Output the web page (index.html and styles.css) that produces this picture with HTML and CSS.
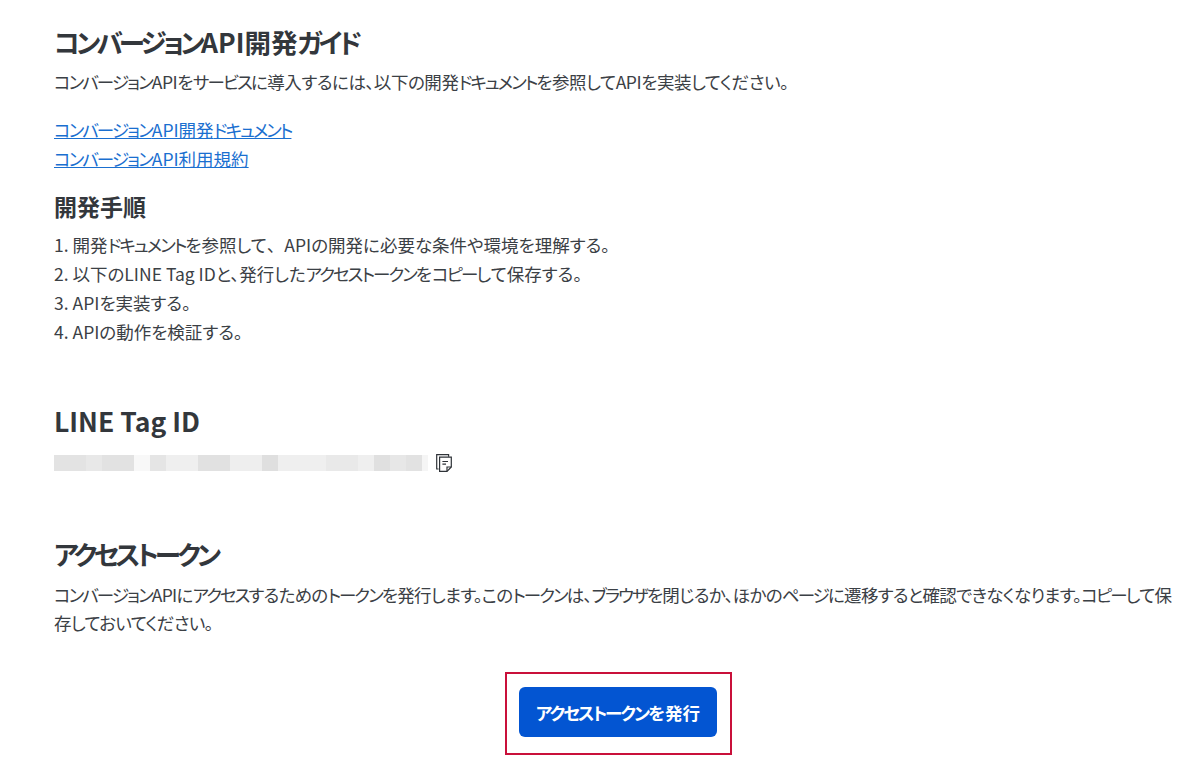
FILE: index.html
```html
<!DOCTYPE html>
<html lang="ja">
<head>
	<meta charset="UTF-8">
	<title>コンバージョンAPI開発ガイド</title>
	<link rel="stylesheet" href="styles.css">
</head>
<body>
	<main class="container">
		<section class="guide">
			<h1><span class="ka">コンバージョン</span>API開発<span class="ka">ガイド</span></h1>
			<p><span class="ka">コンバージョン</span>APIを<span class="ka">サービス</span>に導入するには、以下の開発<span class="ka">ドキュメント</span>を参照してAPIを実装してください。</p>
			<div class="links">
				<a href="#"><span class="ka">コンバージョン</span>API開発<span class="ka">ドキュメント</span></a>
				<a href="#"><span class="ka">コンバージョン</span>API利用規約</a>
			</div>
			<h2>開発手順</h2>
			<ol class="steps">
				<li>1. 開発<span class="ka">ドキュメント</span>を参照して<span class="pu">、</span>APIの開発に必要な条件や環境を理解する。</li>
				<li>2. 以下のLINE Tag IDと、発行した<span class="ka">アクセストークン</span>を<span class="ka">コピー</span>して保存する。</li>
				<li>3. APIを実装する。</li>
				<li>4. APIの動作を検証する。</li>
			</ol>
		</section>

		<section class="tag">
			<h1>LINE Tag ID</h1>
			<div class="tag-row">
				<span class="tag-value"></span>
				<svg class="copy-icon" width="16" height="18" viewBox="0 0 16 18" fill="none" stroke="#2f3338" stroke-width="1.2">
					<path d="M2.6 15H.7V.7H12.6V2.8"/>
					<path d="M3.6 3.2H15.3V13L11 17.3H3.6Z"/>
					<path d="M11 17.3V13H15.3"/>
					<path d="M6.4 7.5H12M6.4 10.2H10"/>
				</svg>
			</div>
		</section>

		<section class="token">
			<h1><span class="ka">アクセストークン</span></h1>
			<p><span class="ka">コンバージョン</span>APIに<span class="ka">アクセス</span>するための<span class="ka">トークン</span>を発行します。この<span class="ka">トークン</span>は、<span class="ka">ブラウザ</span>を閉じるか、ほかの<span class="ka">ページ</span>に遷移すると確認できなくなります。<span class="ka">コピー</span>して保<br>存しておいてください。</p>
			<div class="actions">
				<div class="highlight">
					<button class="btn-issue"><span class="ka">アクセストークン</span>を発行</button>
				</div>
			</div>
		</section>
	</main>
</body>
</html>
```

FILE: styles.css
```css
html, body {
	margin: 0;
	background: #fff;
}
body {
	font-family: "Noto Sans CJK JP", "Noto Sans", sans-serif;
	font-feature-settings: "palt";
	font-size: 17.5px;
	line-height: 28.8px;
	color: #3b4045;
	overflow: hidden;
}
.container {
	padding: 23px 10px 0 54px;
}
/* katakana runs are narrower than the kanji in the reference */
.ka {
	letter-spacing: -0.11em;
}
.pu {
	font-feature-settings: normal;
}
h1 {
	margin: 0;
	font-size: 26.5px;
	line-height: 38px;
	font-weight: 700;
	color: #33373c;
}
h1 .ka {
	letter-spacing: -0.14em;
}
h2 {
	margin: 16px 0 0;
	font-size: 23px;
	line-height: 34px;
	font-weight: 700;
	color: #33373c;
}
p {
	margin: 0;
	letter-spacing: -0.025em;
}
.guide p {
	margin-top: 7px;
}
.links {
	margin-top: 19px;
}
.links a {
	display: block;
	width: fit-content;
	color: #1a6fd0;
}
.steps {
	margin: 8px 0 0;
	padding: 0;
	list-style: none;
}
.tag {
	margin-top: 55px;
}
.tag-row {
	display: flex;
	align-items: center;
	gap: 8px;
	margin-top: 14px;
}
.tag-value {
	width: 374px;
	height: 16px;
	background: linear-gradient(to right,
		#e3e3e3 0 32px, #e8e8e8 32px 48px, #e2e2e2 48px 80px, #f8f8f8 80px 96px,
		#e5e5e5 96px 112px, #efefef 112px 144px, #e1e1e1 144px 176px, #eeeeee 176px 208px,
		#dfdfdf 208px 224px, #efefef 224px 272px, #e9e9e9 272px 304px, #efefef 304px 320px,
		#e0e0e0 320px 336px, #e7e7e7 336px 352px, #e2e2e2 352px 368px, #f5f5f5 368px 374px);
}
.token {
	margin-top: 63px;
}
.token p {
	margin-top: 8px;
	letter-spacing: -0.04em;
}
.actions {
	display: flex;
	justify-content: center;
	margin-top: 34px;
}
.highlight {
	padding: 13px 13px 16px 12px;
	border: 2px solid #c9103a;
}
.btn-issue {
	display: block;
	width: 198px;
	height: 50px;
	padding: 0;
	border: 0;
	border-radius: 6px;
	background: #0355d2;
	color: #fff;
	font-family: inherit;
	font-feature-settings: inherit;
	font-size: 17.5px;
	font-weight: 700;
	cursor: pointer;
}
```
